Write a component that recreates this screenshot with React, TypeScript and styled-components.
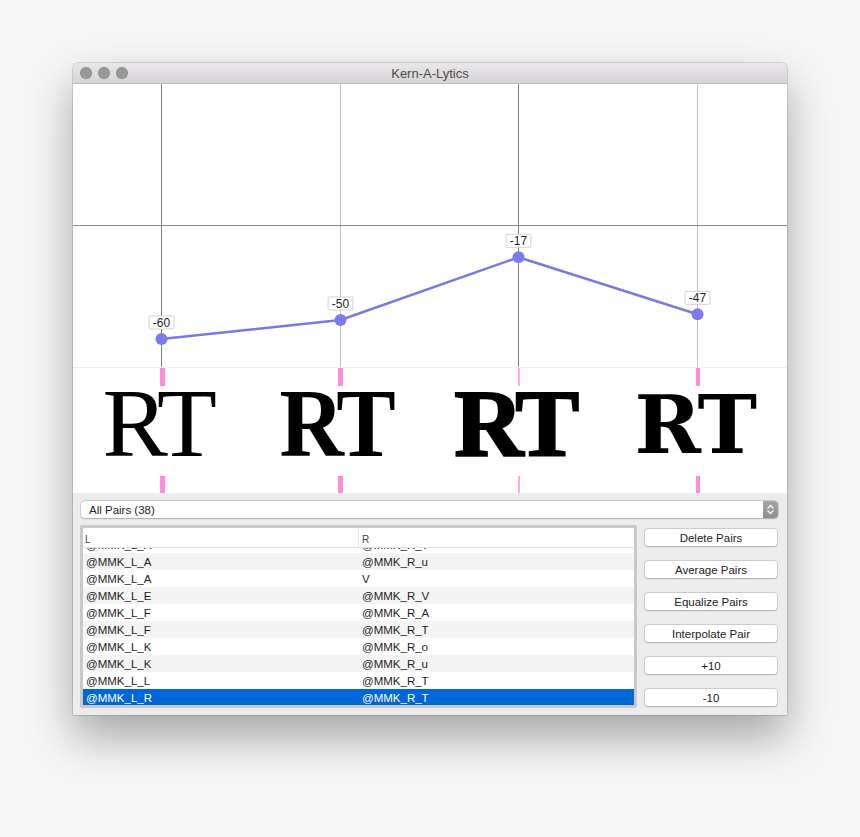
import React from 'react';
import styled, { createGlobalStyle } from 'styled-components';

const GlobalStyle = createGlobalStyle`
  html, body {
    margin: 0;
    padding: 0;
    background: #f6f6f6;
  }
  body {
    min-height: 837px;
    font-family: "Liberation Sans", Arial, sans-serif;
    -webkit-font-smoothing: antialiased;
  }
`;

const Window = styled.div`
  width: 714px;
  margin: 63px 0 0 73px;
  border-radius: 5px 5px 0 0;
  overflow: hidden;
  background: #ececec;
  box-shadow: 0 22px 45px rgba(0, 0, 0, 0.33), 0 0 0 0.5px rgba(0, 0, 0, 0.25);
`;

const TitleBar = styled.div`
  height: 20px;
  position: relative;
  display: flex;
  align-items: center;
  padding-left: 7px;
  gap: 6px;
  background: linear-gradient(#e9e7e9, #d6d4d6);
  border-bottom: 1px solid #bdbdbd;
`;

const Light = styled.span`
  width: 12px;
  height: 12px;
  border-radius: 50%;
  background: #979797;
  box-shadow: inset 0 0 0 0.5px rgba(0, 0, 0, 0.12);
`;

const Title = styled.div`
  position: absolute;
  left: 0;
  right: 0;
  text-align: center;
  font-size: 13px;
  color: #4b4b4b;
  pointer-events: none;
`;

const Chart = styled.svg`
  display: block;
  background: #ffffff;
  border-bottom: 1px solid #eeeeee;
`;

const GlyphRow = styled.div`
  display: grid;
  grid-template-columns: repeat(4, 1fr);
  height: 125px;
  background: #ffffff;
`;

const GlyphCell = styled.div`
  display: flex;
  flex-direction: column;
  align-items: center;
  overflow: visible;
`;

const Mark = styled.div<{ $w: number; $bottom?: boolean; $faint?: boolean }>`
  width: ${p => p.$w}px;
  height: ${p => (p.$bottom ? 17 : 18)}px;
  margin-top: ${p => (p.$bottom ? 'auto' : '0')};
  background: ${p => (p.$faint ? '#ffa8e2' : '#ff8bd9')};
  flex-shrink: 0;
`;

const Glyph = styled.div<{ $variant: 'light' | 'bold' | 'black' | 'slab' }>`
  color: #000;
  white-space: nowrap;
  line-height: 74px;
  height: 74px;
  margin-right: ${p => (p.$variant === 'slab' ? 6 : 10)}px;
  font-family: ${p =>
    p.$variant === 'slab'
      ? '"DejaVu Serif", serif'
      : '"Liberation Serif", "Times New Roman", serif'};
  font-size: ${p => (p.$variant === 'slab' ? 80 : p.$variant === 'black' ? 96 : 98)}px;
  font-weight: ${p => (p.$variant === 'light' ? 400 : 700)};
  letter-spacing: ${p => (p.$variant === 'slab' ? -2 : -5)}px;
  transform: ${p =>
    p.$variant === 'bold'
      ? 'scaleX(0.91)'
      : p.$variant === 'slab'
        ? 'translateY(2px)'
        : p.$variant === 'black'
          ? 'translateY(1px)'
          : 'none'};
  -webkit-text-stroke: ${p => (p.$variant === 'black' ? '2px #000' : '0')};
`;

const Controls = styled.div`
  padding: 8px 9px 7px 7px;
  display: flex;
  flex-direction: column;
  gap: 7px;
`;

const Popup = styled.div`
  margin-left: 1px;
  height: 17px;
  display: flex;
  align-items: center;
  background: #ffffff;
  border-radius: 4px;
  box-shadow: 0 0 0 0.5px rgba(0, 0, 0, 0.22), 0 0.5px 1.5px rgba(0, 0, 0, 0.18);
  font-size: 11.5px;
  color: #222;
`;

const PopupLabel = styled.span`
  flex: 1;
  padding-left: 8px;
`;

const Stepper = styled.span`
  width: 15px;
  height: 17px;
  border-radius: 0 4px 4px 0;
  background: linear-gradient(#a6a6a6, #8f8f8f);
  display: flex;
  align-items: center;
  justify-content: center;
`;

const Lower = styled.div`
  display: flex;
  gap: 8px;
`;

const Table = styled.div`
  width: 551px;
  height: 177px;
  border: 3px solid #c9c9c9;
  border-radius: 2px;
  background: #ffffff;
  display: flex;
  flex-direction: column;
  overflow: hidden;
`;

const HeaderRow = styled.div`
  height: 19px;
  display: grid;
  grid-template-columns: 275px 1fr;
  border-bottom: 1px solid #e3e3e3;
  font-size: 10px;
  color: #444;
  flex-shrink: 0;
`;

const HeaderCell = styled.div<{ $divider?: boolean }>`
  display: flex;
  align-items: center;
  padding-left: ${p => (p.$divider ? 3 : 2)}px;
  padding-top: 3px;
  border-left: ${p => (p.$divider ? '1px solid #e3e3e3' : 'none')};
`;

const Body = styled.div`
  flex: 1;
  overflow: hidden;
`;

const Row = styled.div<{ $stripe?: boolean; $selected?: boolean; $clipped?: boolean }>`
  height: 17px;
  display: grid;
  grid-template-columns: 275px 1fr;
  align-items: center;
  margin-top: ${p => (p.$clipped ? '-12px' : '0')};
  background: ${p => (p.$selected ? '#0067d8' : p.$stripe ? '#f4f4f4' : '#ffffff')};
  color: ${p => (p.$selected ? '#ffffff' : '#1e1e1e')};
  font-size: 11.5px;
`;

const Cell = styled.div<{ $right?: boolean }>`
  padding-left: ${p => (p.$right ? 4 : 3)}px;
  white-space: nowrap;
`;

const Buttons = styled.div`
  width: 132px;
  padding-top: 4px;
  display: flex;
  flex-direction: column;
  gap: 15px;
`;

const Button = styled.div`
  height: 17px;
  display: flex;
  align-items: center;
  justify-content: center;
  background: #ffffff;
  border-radius: 3px;
  box-shadow: 0 0 0 0.5px rgba(0, 0, 0, 0.2), 0 0.5px 1.5px rgba(0, 0, 0, 0.2);
  font-size: 11.5px;
  color: #222;
`;

const masters = [
  { value: -60, variant: 'light' as const, mark: 5, dark: true },
  { value: -50, variant: 'bold' as const, mark: 5, dark: false },
  { value: -17, variant: 'black' as const, mark: 2, dark: true },
  { value: -47, variant: 'slab' as const, mark: 3.5, dark: false },
];

const rows = [
  ['@MMK_L_A', '@MMK_R_T'],
  ['@MMK_L_A', '@MMK_R_u'],
  ['@MMK_L_A', 'V'],
  ['@MMK_L_E', '@MMK_R_V'],
  ['@MMK_L_F', '@MMK_R_A'],
  ['@MMK_L_F', '@MMK_R_T'],
  ['@MMK_L_K', '@MMK_R_o'],
  ['@MMK_L_K', '@MMK_R_u'],
  ['@MMK_L_L', '@MMK_R_T'],
  ['@MMK_L_R', '@MMK_R_T'],
];

const buttons = ['Delete Pairs', 'Average Pairs', 'Equalize Pairs', 'Interpolate Pair', '+10', '-10'];

const CHART_W = 714;
const CHART_H = 283;
const ZERO = 141;
const SCALE = 1.9;

function KernChart() {
  const colW = CHART_W / masters.length;
  const pts = masters.map((m, i) => ({
    x: Math.round(colW * i + colW / 2) - 0.5,
    y: ZERO - m.value * SCALE,
    ...m,
  }));
  return (
    <Chart width={CHART_W} height={CHART_H} viewBox={`0 0 ${CHART_W} ${CHART_H}`}>
      {pts.map(p => (
        <line key={`v${p.x}`} x1={p.x} x2={p.x} y1={0} y2={CHART_H} stroke={p.dark ? '#808080' : '#c2c2c2'} strokeWidth={1} />
      ))}
      <line x1={0} x2={CHART_W} y1={ZERO + 0.5} y2={ZERO + 0.5} stroke="#8a8a8a" strokeWidth={1} />
      <polyline
        points={pts.map(p => `${p.x},${p.y}`).join(' ')}
        fill="none"
        stroke="#7878e6"
        strokeWidth={2.5}
        strokeLinejoin="round"
      />
      {pts.map(p => {
        const label = String(p.value);
        const w = label.length * 6.6 + 5;
        return (
          <g key={`p${p.x}`}>
            <circle cx={p.x} cy={p.y} r={6} fill="#7b7bef" />
            <rect x={p.x - w / 2} y={p.y - 23} width={w} height={13} fill="#ffffff" stroke="#c6c6c6" strokeWidth={0.8} rx={1} />
            <text
              x={p.x}
              y={p.y - 12.5}
              textAnchor="middle"
              fontSize={12}
              fontFamily='"Liberation Sans", Arial, sans-serif'
              fill="#1e1e1e"
            >
              {label}
            </text>
          </g>
        );
      })}
    </Chart>
  );
}

export default function App() {
  return (
    <>
      <GlobalStyle />
      <Window>
        <TitleBar>
          <Light />
          <Light />
          <Light />
          <Title>Kern-A-Lytics</Title>
        </TitleBar>
        <KernChart />
        <GlyphRow>
          {masters.map(m => (
            <GlyphCell key={m.value}>
              <Mark $w={m.mark} $faint={m.mark < 3} />
              <Glyph $variant={m.variant}>RT</Glyph>
              <Mark $w={m.mark} $faint={m.mark < 3} $bottom />
            </GlyphCell>
          ))}
        </GlyphRow>
        <Controls>
          <Popup>
            <PopupLabel>All Pairs (38)</PopupLabel>
            <Stepper>
              <svg width="7" height="11" viewBox="0 0 7 11">
                <path d="M1 4 L3.5 1.5 L6 4 M1 7 L3.5 9.5 L6 7" fill="none" stroke="#ffffff" strokeWidth="1.2" strokeLinecap="round" strokeLinejoin="round" />
              </svg>
            </Stepper>
          </Popup>
          <Lower>
            <Table>
              <HeaderRow>
                <HeaderCell>L</HeaderCell>
                <HeaderCell $divider>R</HeaderCell>
              </HeaderRow>
              <Body>
                {rows.map((r, i) => (
                  <Row key={i} $clipped={i === 0} $stripe={i % 2 === 1} $selected={i === rows.length - 1}>
                    <Cell>{r[0]}</Cell>
                    <Cell $right>{r[1]}</Cell>
                  </Row>
                ))}
              </Body>
            </Table>
            <Buttons>
              {buttons.map(b => (
                <Button key={b}>{b}</Button>
              ))}
            </Buttons>
          </Lower>
        </Controls>
      </Window>
    </>
  );
}
